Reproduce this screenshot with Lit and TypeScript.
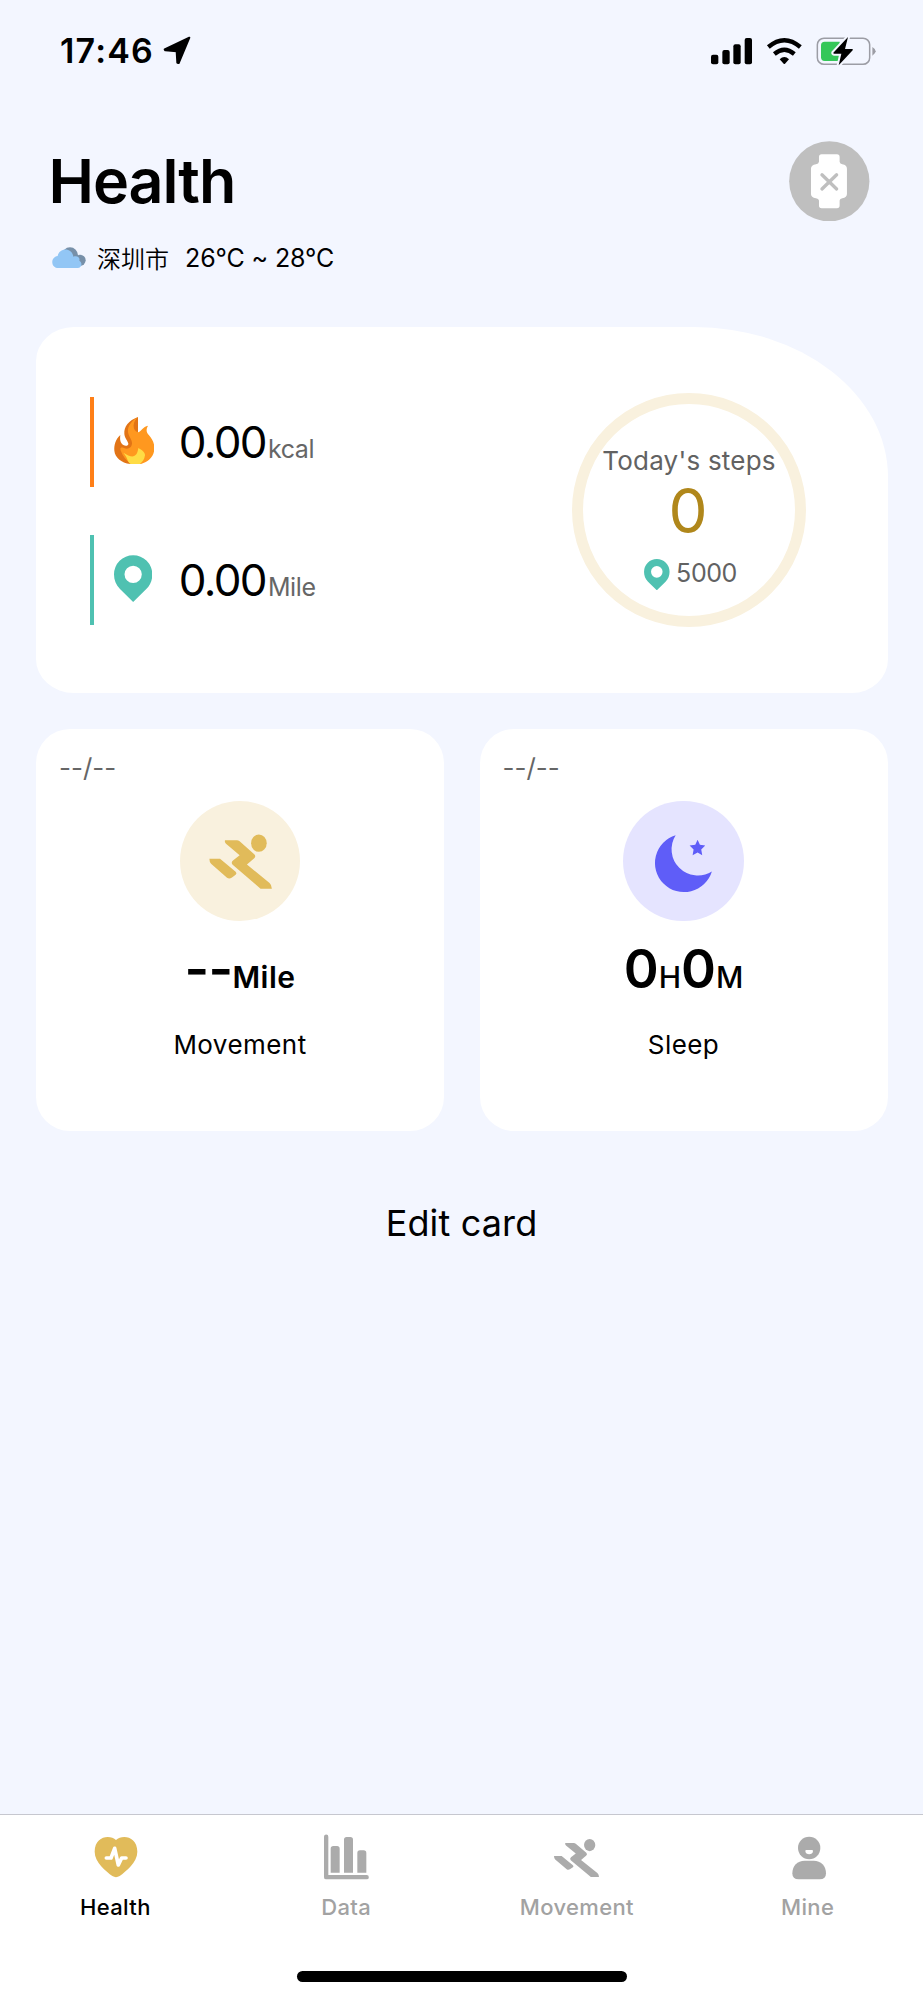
import { LitElement, html, svg, css } from "lit";
import { customElement, state } from "lit/decorators.js";
import { classMap } from "lit/directives/class-map.js";

const runner = svg`
  <path d="M584 358H620Q624 358 628 361L672 400Q678 406 672 412L650 431L718 487Q725 493 725 504H691L607 432Q601 425 608 419L628 403L587 369Q582 364 584 358Z"/>
  <path d="M537 414H569L616 453Q621 458 616 462L605 470Q597 476 590 471L542 429Q537 424 537 414Z"/>
  <ellipse cx="686" cy="367" rx="23.5" ry="26"/>`;

const pin = svg`<path fill-rule="evenodd" d="M308.5 846L269 807C257 795 251 781 251 763A57.5 57.5 0 0 1 366 763C366 781 360 795 348 807ZM308.5 737A26 26 0 1 0 308.5 789A26 26 0 1 0 308.5 737Z"/>`;

const tabs = [
  {
    label: "Health",
    box: "154 99 144 144",
    icon: svg`
      <path d="M229 120C247 102 293 108 293 155C293 187 258 214 240 228Q229 235 218 228C200 214 165 187 165 155C165 108 211 102 229 120Z"/>
      <path class="pulse" d="M200 174H214L225 145L236 195L246 174H259"/>`,
  },
  {
    label: "Data",
    box: "846 99 144 144",
    icon: svg`
      <path class="axis" d="M858.5 110V231.5H980"/>
      <path d="M872 218V146Q872 138 880 138H891Q899 138 899 146V218ZM912 218V119Q912 111 920 111H931Q939 111 939 119V218ZM952 218V159Q952 151 960 151H971Q979 151 979 159V218Z"/>`,
  },
  {
    label: "Movement",
    box: "219 99 144 144",
    icon: svg`<g transform="translate(222 117) scale(.718 .7) translate(-537 -341)">${runner}</g>`,
  },
  {
    label: "Mine",
    box: "911 99 144 144",
    icon: svg`
      <circle cx="986.5" cy="144" r="33.5"/>
      <path d="M936 220C936 197 951 182 973 182H1000C1022 182 1037 197 1037 220Q1037 238 1018 238H955Q936 238 936 220Z"/>
      <path class="smile" d="M975 153Q975 150 978 150H995Q998 150 998 153C998 166 975 166 975 153Z"/>`,
  },
];

@customElement("app-root")
export class AppRoot extends LitElement {
  @state() private active = "Health";

  static styles = css`
    :host {
      display: flex;
      flex-direction: column;
      box-sizing: border-box;
      height: 2000px;
      background: #f3f6ff;
      color: #000;
      font-family: Inter, "Noto Sans CJK SC", sans-serif;
      overflow: hidden;
    }
    svg { display: block; flex: none; }
    .status {
      display: flex;
      align-items: center;
      height: 101px;
      box-sizing: border-box;
      padding: 0 46.3px 0 60px;
    }
    .time { font-size: 34px; font-weight: 600; letter-spacing: 1.17px; line-height: 40px; }
    .arrow { width: 28px; height: 28.7px; margin-left: 9px; stroke: #000; stroke-width: 6; stroke-linejoin: round; }
    .system { width: 166.7px; height: 30px; margin-left: auto; }
    .wave { fill: none; stroke: #000; stroke-width: 13; }
    .shell { fill: none; stroke: #9c9da5; stroke-width: 4.5; }
    .nub { fill: #9c9da5; }
    .charge { fill: #34c759; }
    .bolt { stroke: #f3f6ff; stroke-width: 12; paint-order: stroke; stroke-linejoin: round; }

    .head {
      display: flex;
      align-items: center;
      justify-content: space-between;
      margin: 39.5px 53.3px 0 48.5px;
    }
    h1 { margin: 0; font-size: 61px; font-weight: 600; letter-spacing: -1.04px; line-height: 80px; }
    .watch { width: 80.6px; height: 80.6px; }
    .disc { fill: #bfbfbf; }
    .device { fill: #fff; }
    .cross { stroke: #bfbfbf; stroke-width: 10; stroke-linecap: round; }
    .weather {
      display: flex;
      align-items: center;
      margin: 22px 0 0 52px;
      height: 30px;
      font-size: 25px;
      line-height: 30px;
    }
    .cloud { width: 34px; height: 21.4px; }
    .city { font-family: "Noto Sans CJK SC", sans-serif; font-weight: 350; font-size: 24px; margin-left: 11px; }
    .temp { margin-left: 16px; letter-spacing: -.12px; }

    .summary {
      display: flex;
      justify-content: space-between;
      box-sizing: border-box;
      height: 366px;
      margin: 54px 35.5px 0 36px;
      padding: 0 81.5px 0 53.5px;
      background: #fff;
      border-radius: 38px 194px 36px 38px / 34px 150px 34px 34px;
    }
    .stats { display: flex; flex-direction: column; gap: 48.5px; padding-top: 69.5px; }
    .stat { display: flex; align-items: center; height: 90px; }
    .rule { width: 4.6px; height: 90px; }
    .rule.fire { background: #ff7f17; }
    .rule.road { background: #4fc1b1; }
    .glyph { width: 40.7px; height: 47px; margin: 0 0 3px 19.5px; }
    .pin { fill: #4fc1b1; }
    .glyph.pin { width: 38.3px; margin-right: 2.4px; }
    .reading { margin-left: 24.5px; font-size: 44px; line-height: 60px; white-space: nowrap; }
    .num { letter-spacing: -1.65px; }
    .unit { font-size: 25px; line-height: 0; color: #666; margin-left: 2px; letter-spacing: -.4px; }
    .ring {
      display: flex;
      flex-direction: column;
      align-items: center;
      box-sizing: border-box;
      width: 234px;
      height: 234px;
      margin-top: 66.3px;
      padding-top: 41.2px;
      border: 11.3px solid #f9f1de;
      border-radius: 50%;
      white-space: nowrap;
    }
    .caption { font-size: 26px; line-height: 30px; color: #626262; letter-spacing: .21px; }
    .steps { font-size: 62px; line-height: 70px; color: #b0871b; margin-right: 2px; }
    .goal {
      display: flex;
      align-items: center;
      gap: 6.5px;
      margin: 12.5px 0 0 3px;
      height: 30px;
      font-size: 25px;
      line-height: 30px;
      letter-spacing: -.41px;
      color: #626262;
    }
    .goal .pin { width: 25.6px; height: 31.3px; margin-top: 3px; }

    .cards {
      display: grid;
      grid-template-columns: 1fr 1fr;
      gap: 35.5px;
      margin: 36px 35.5px 0 36px;
    }
    .card {
      display: flex;
      flex-direction: column;
      align-items: center;
      box-sizing: border-box;
      height: 402px;
      padding-top: 23.5px;
      background: #fff;
      border-radius: 34px;
    }
    .date { align-self: flex-start; margin-left: 23px; font-size: 26px; line-height: 30px; color: #666; }
    .badge { width: 120.6px; height: 120.6px; margin-top: 18.2px; border-radius: 50%; }
    .badge.gold { background: #f9f1de; fill: #e1bb5a; }
    .badge.night { background: #e5e4ff; fill: #5f5df8; }
    .value { height: 60px; margin-top: 17.9px; line-height: 60px; font-weight: 600; font-size: 53px; white-space: nowrap; }
    .dashes { letter-spacing: -.66px; }
    .mile, .hm { font-size: 30px; line-height: 0; }
    .mile { letter-spacing: .5px; }
    .hm { font-weight: 500; }
    .name { margin-top: 30.3px; font-size: 26px; line-height: 30px; letter-spacing: .45px; }
    .edit {
      align-self: center;
      margin-top: 68px;
      padding: 0;
      border: 0;
      background: none;
      color: inherit;
      font: 400 36px/48px Inter, sans-serif;
      letter-spacing: .14px;
    }

    .bar {
      display: flex;
      flex-direction: column;
      align-items: center;
      box-sizing: border-box;
      height: 186.5px;
      margin-top: auto;
      background: #fff;
      border-top: 1px solid #c6c7cf;
    }
    .tabs { display: grid; grid-template-columns: repeat(4, 1fr); width: 100%; padding-top: 18px; }
    .tab {
      display: flex;
      flex-direction: column;
      align-items: center;
      color: #a2a2a2;
      fill: #ababab;
      font-size: 22px;
      font-weight: 500;
      line-height: 28px;
      letter-spacing: .35px;
    }
    .tab.on { color: #000; fill: #e1bb5a; }
    .tab svg { width: 48px; height: 48px; margin-bottom: 12px; }
    .pulse { fill: none; stroke: #fff; stroke-width: 11; stroke-linecap: round; stroke-linejoin: round; }
    .axis { fill: none; stroke: #ababab; stroke-width: 13; stroke-linecap: round; stroke-linejoin: round; }
    .smile { fill: #fff; }
    .home { width: 330px; height: 11px; margin-top: 50px; border-radius: 6px; background: #000; }
  `;

  render() {
    return html`
      <div class="status">
        <span class="time">17:46</span>
        <svg class="arrow" viewBox="370 50 84 86"><path d="M449 55L375 90L377 93L411 96L413 130L417 131Z"/></svg>
        <svg class="system" viewBox="60 45 500 90">
          <rect x="63" y="101" width="22" height="29" rx="6"/>
          <rect x="97" y="87" width="22" height="43" rx="6"/>
          <rect x="130" y="70" width="22" height="60" rx="6"/>
          <rect x="164" y="51" width="22" height="79" rx="6"/>
          <path class="wave" d="M235 78Q283 37 331 78"/>
          <path class="wave" d="M253 99Q283 74 313 99"/>
          <path d="M269 115Q283 101 297 115L285 128Q283 130 281 128Z"/>
          <rect class="shell" x="382" y="51.5" width="157" height="78.5" rx="20"/>
          <path class="nub" d="M547 78Q557 84 557 91Q557 98 547 104Z"/>
          <path class="charge" d="M404 62H449V120H404Q393 120 393 109V73Q393 62 404 62Z"/>
          <path class="bolt" d="M474 48L430 95Q429 98 433 98H454L446 133L488 88Q490 84 486 84H465Z"/>
        </svg>
      </div>

      <div class="head">
        <h1>Health</h1>
        <svg class="watch" viewBox="297 362 242 242">
          <circle class="disc" cx="418" cy="483" r="120.5"/>
          <path class="device" d="M387 410Q387 402 395 402H441Q449 402 449 410V424Q450 431 457 432Q471 434 471 445V521Q471 531 457 534Q450 535 449 541V556Q449 564 441 564H395Q387 564 387 556V541Q386 535 378 534Q363 531 363 521V445Q363 434 378 432Q386 431 387 424Z"/>
          <path class="cross" d="M396 463.500L440 506M440 463.500L396 506"/>
        </svg>
      </div>
      <div class="weather">
        <svg class="cloud" viewBox="36 684 102 64">
          <g fill="#7790a9"><circle cx="90" cy="709" r="24"/><circle cx="120" cy="724" r="17"/></g>
          <path fill="#92c6f5" d="M56 747C31 747 31 714 53 711C58 684 97 685 100 713C112 708 121 716 118 725C128 730 126 747 113 747Z"/>
        </svg>
        <span class="city">深圳市</span>
        <span class="temp">26°C ~ 28°C</span>
      </div>

      <section class="summary">
        <div class="stats">
          <div class="stat">
            <div class="rule fire"></div>
            <svg class="glyph" viewBox="26 36 122 141">
              <path fill="#e27416" d="M98 36C70 46 55 65 57 87C58 100 68 108 69 116C69 123 60 124 54 120C45 114 43 104 45 90C30 104 26 120 27 137C29 157 47 173 75 177H100L98 80Z"/>
              <path fill="#ff981f" d="M98 36C75 50 64 68 69 86C72 97 80 104 80 114C80 129 67 134 56 129C45 125 43 130 47 139C52 153 62 166 76 177H107C131 171 146 153 147 132C148 115 140 101 131 91C122 81 122 73 128 62C113 65 108 78 99 82C88 80 84 71 85 60C86 51 90 43 98 36Z"/>
              <path fill="#ffdc45" d="M54 143C66 150 75 155 84 154C95 151 97 140 99 129C109 134 120 143 119 151C117 164 111 171 104 177H76C65 170 68 159 54 143Z"/>
            </svg>
            <div class="reading"><span class="num">0.00</span><span class="unit">kcal</span></div>
          </div>
          <div class="stat">
            <div class="rule road"></div>
            <svg class="glyph pin" viewBox="251 705 115 141">${pin}</svg>
            <div class="reading"><span class="num">0.00</span><span class="unit">Mile</span></div>
          </div>
        </div>
        <div class="ring">
          <div class="caption">Today's steps</div>
          <div class="steps">0</div>
          <div class="goal"><svg class="pin" viewBox="251 705 115 141">${pin}</svg>5000</div>
        </div>
      </section>

      <section class="cards">
        <div class="card">
          <div class="date">--/--</div>
          <svg class="badge gold" viewBox="449 240 362 363">${runner}</svg>
          <div class="value"><span class="dashes">--</span><span class="mile">Mile</span></div>
          <div class="name">Movement</div>
        </div>
        <div class="card">
          <div class="date">--/--</div>
          <svg class="badge night" viewBox="461 240 362 363">
            <path d="M619 343A87.500 87.500 0 1 0 728 452A79 79 0 0 1 619 343Z"/>
            <path d="M685 357L692 372L708 374L696 386L699 403L685 395L670 403L673 386L661 374L678 372Z"/>
          </svg>
          <div class="value">0<span class="hm">H</span>0<span class="hm">M</span></div>
          <div class="name">Sleep</div>
        </div>
      </section>
      <button class="edit">Edit card</button>

      <nav class="bar">
        <div class="tabs">
          ${tabs.map(
            (t) => html`
              <div class=${classMap({ tab: true, on: t.label === this.active })} @click=${() => (this.active = t.label)}>
                <svg viewBox=${t.box}>${t.icon}</svg>
                <span>${t.label}</span>
              </div>`
          )}
        </div>
        <div class="home"></div>
      </nav>
    `;
  }
}
